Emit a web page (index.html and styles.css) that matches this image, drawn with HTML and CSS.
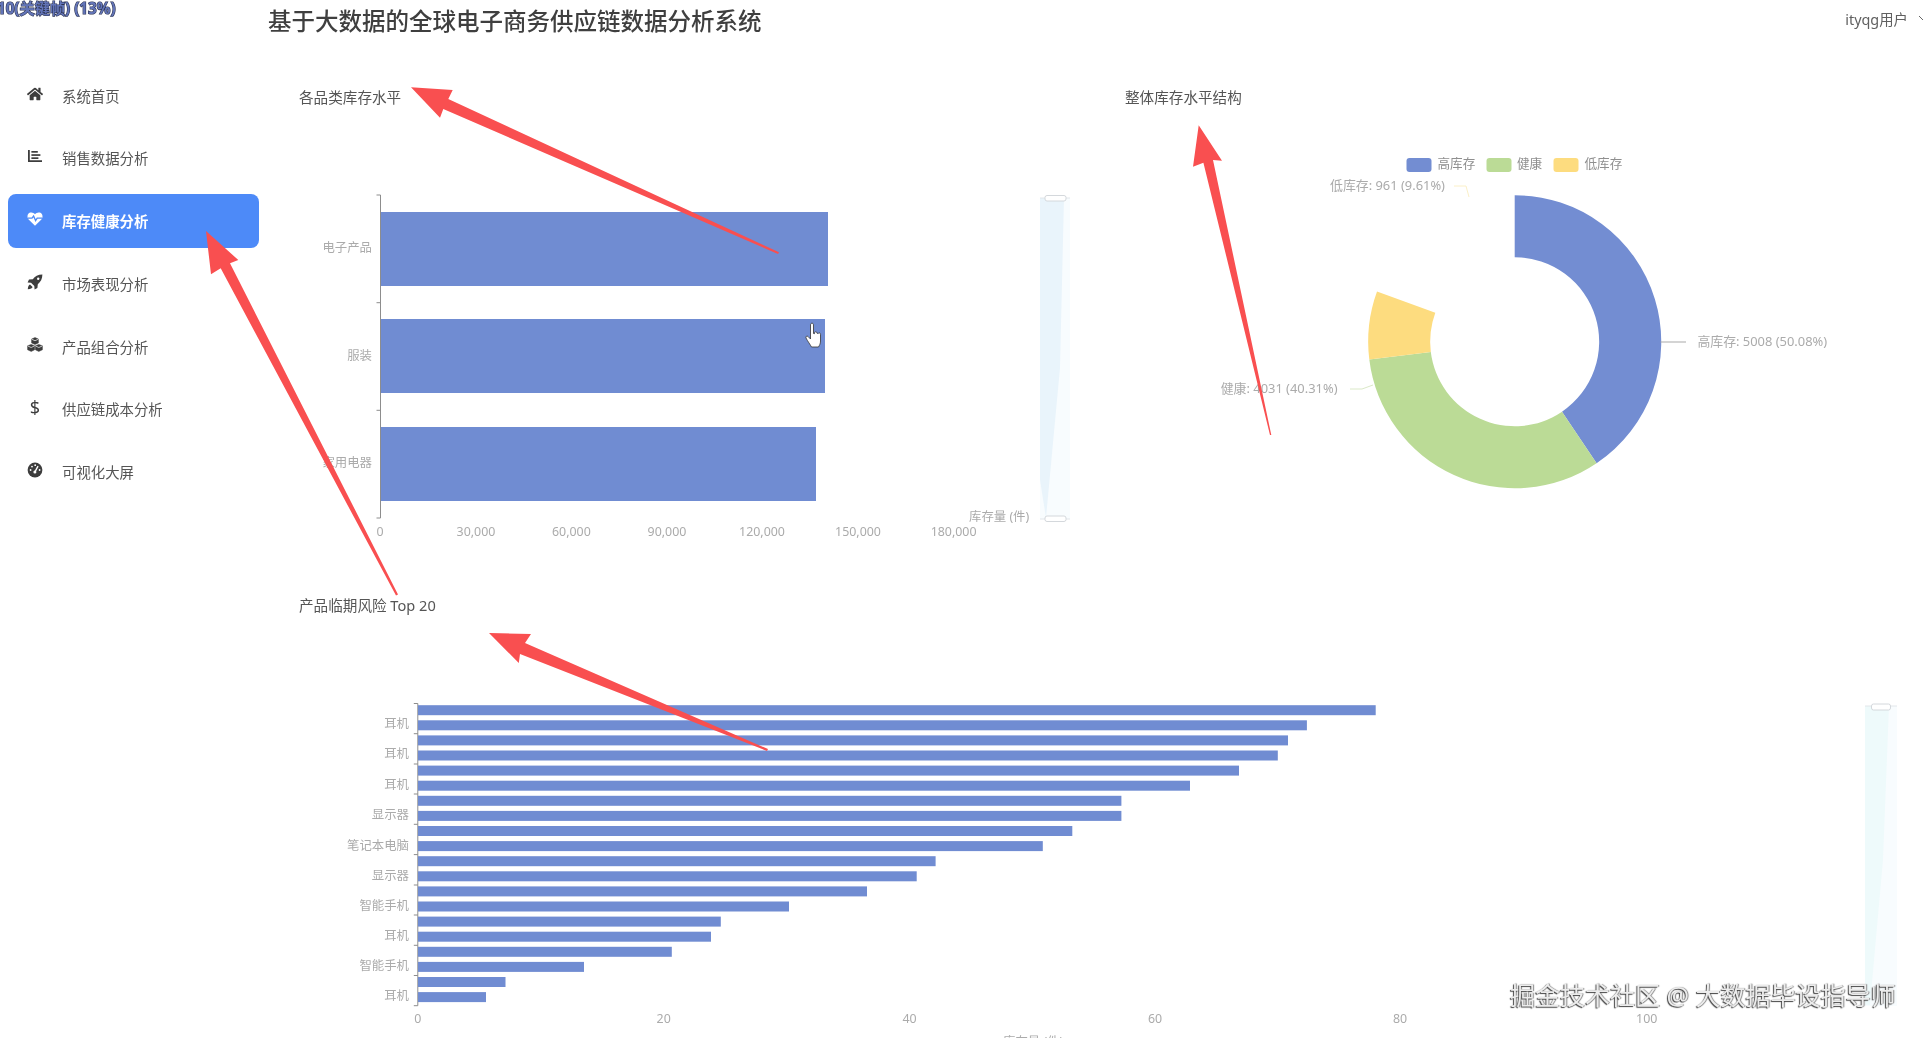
FILE: index.html
```html
<!DOCTYPE html>
<html lang="zh-CN">
<head>
<meta charset="utf-8">
<title>基于大数据的全球电子商务供应链数据分析系统</title>
<link rel="stylesheet" href="styles.css">
</head>
<body>
<div class="app">
  <aside class="sidebar">
    <nav class="nav">
      <a class="nav-item"><svg class="nav-icon" viewBox="0 0 576 512"><path d="M280.37 148.26L96 300.11V464a16 16 0 0 0 16 16l112.06-.29a16 16 0 0 0 15.92-16V368a16 16 0 0 1 16-16h64a16 16 0 0 1 16 16v95.64a16 16 0 0 0 16 16.05L464 480a16 16 0 0 0 16-16V300L295.67 148.26a12.19 12.19 0 0 0-15.3 0zM571.6 251.47L488 182.56V44.05a12 12 0 0 0-12-12h-56a12 12 0 0 0-12 12v72.61L318.47 43a48 48 0 0 0-61 0L4.34 251.47a12 12 0 0 0-1.6 16.9l25.5 31A12 12 0 0 0 45.15 301l235.22-193.74a12.19 12.19 0 0 1 15.3 0L530.9 301a12 12 0 0 0 16.9-1.6l25.5-31a12 12 0 0 0-1.7-16.93z"/></svg><span>系统首页</span></a>
      <a class="nav-item"><svg class="nav-icon" viewBox="0 0 16 16"><path d="M1 2h1.8v10.2H15V14H1z"/><rect x="4.4" y="3" width="6.4" height="1.7"/><rect x="4.4" y="6.2" width="9" height="1.7"/><rect x="4.4" y="9.3" width="7" height="1.7"/></svg><span>销售数据分析</span></a>
      <a class="nav-item is-active"><svg class="nav-icon" viewBox="0 0 16 16"><path d="M8 14.8 1.6 8.4C-.4 6.2.4 2.4 3.2 1.6 5 1.1 6.8 1.8 8 3.3 9.2 1.8 11 1.1 12.8 1.6 15.6 2.4 16.4 6.2 14.4 8.4Z"/><polyline class="pulse" points="1,7.2 5,7.2 6.6,5 8.6,9.6 10.2,7.2 15,7.2"/></svg><span>库存健康分析</span></a>
      <a class="nav-item"><svg class="nav-icon" viewBox="0 0 16 16"><path d="M15.4.6C11 .7 7.9 2.3 5.8 5.2L2 5.6.6 8.4l3.4.3 3.3 3.3.3 3.4 2.8-1.4.4-3.8C13.7 8.1 15.3 5 15.4.6z"/><circle class="hole" cx="11.2" cy="4.8" r="1.2"/><path d="M3 10.4c-1.2.4-2 1.8-2.2 4.8 3-.2 4.4-1 4.8-2.2z"/></svg><span>市场表现分析</span></a>
      <a class="nav-item"><svg class="nav-icon nav-icon-bold" viewBox="0 0 16 16"><path d="M8 .6 11.4 2v3.9L8 7.4 4.6 5.9V2z"/><path d="M4.2 7.4 7.6 8.8v4L4.2 14.4.6 12.8v-4z"/><path d="M11.8 7.4l3.6 1.4v4l-3.6 1.6-3.4-1.6v-4z"/><path class="seam" d="M4.6 2.2 8 3.7l3.4-1.5M.8 9l3.4 1.5L7.4 9M8.6 9l3.2 1.5L15.2 9"/></svg><span>产品组合分析</span></a>
      <a class="nav-item"><span class="nav-icon nav-glyph">$</span><span>供应链成本分析</span></a>
      <a class="nav-item"><svg class="nav-icon" viewBox="0 0 16 16"><circle cx="8" cy="8" r="7.4"/><path class="seam-thick" d="M8.2 9.4 11 4.2"/><circle class="hole" cx="7.9" cy="10" r="1.5"/><circle class="hole" cx="3.6" cy="8" r=".9"/><circle class="hole" cx="5" cy="4.6" r=".9"/><circle class="hole" cx="8.2" cy="3.2" r=".9"/><circle class="hole" cx="12.6" cy="8" r=".9"/></svg><span>可视化大屏</span></a>
    </nav>
  </aside>

  <main class="main">
    <header class="topbar">
      <h1 class="page-title">基于大数据的全球电子商务供应链数据分析系统</h1>
      <div class="user"><span>ityqg用户</span><svg class="chevron" viewBox="0 0 10 6"><polyline points="1,1 5,5 9,1"/></svg></div>
    </header>

    <section class="row-top">
      <div class="panel">
        <h2 class="panel-title panel-title-inset">各品类库存水平</h2>
        <svg class="chart" width="827" height="488" viewBox="298 108 827 488">
          <path class="axis" d="M380.5 195V518M376.5 195H380.5M376.5 302.7H380.5M376.5 410.3H380.5M376.5 518H380.5"/>
          <rect class="bar" x="381" y="212" width="447" height="74"/>
          <rect class="bar" x="381" y="319" width="444" height="74"/>
          <rect class="bar" x="381" y="427" width="435" height="74"/>
          <text class="lbl end" x="372" y="252">电子产品</text>
          <text class="lbl end" x="372" y="360">服装</text>
          <text class="lbl end" x="372" y="467">家用电器</text>
          <text class="lbl mid" x="380" y="536">0</text>
          <text class="lbl mid" x="476" y="536">30,000</text>
          <text class="lbl mid" x="571.4" y="536">60,000</text>
          <text class="lbl mid" x="667" y="536">90,000</text>
          <text class="lbl mid" x="762" y="536">120,000</text>
          <text class="lbl mid" x="858" y="536">150,000</text>
          <text class="lbl mid" x="953.6" y="536">180,000</text>
          <text class="lbl" x="969" y="521">库存量 (件)</text>
          <rect class="zoom-bg" x="1040" y="198" width="30" height="321"/>
          <polygon class="zoom-shape" points="1040,198 1064,198 1060,368 1046,518 1040,480"/>
          <path class="zoom-line" d="M1040 198H1070M1040 519H1070"/>
          <rect class="zoom-handle" x="1045" y="195.5" width="21" height="5.5" rx="2"/>
          <rect class="zoom-handle" x="1045" y="516" width="21" height="5.5" rx="2"/>
        </svg>
      </div>
      <div class="panel">
        <h2 class="panel-title">整体库存水平结构</h2>
        <svg class="chart" width="798" height="488" viewBox="1125 108 798 488">
          <rect class="c-blue" x="1406.5" y="158" width="25" height="14" rx="3"/>
          <text class="lbl-dark" x="1437.5" y="168">高库存</text>
          <rect class="c-green" x="1486.5" y="158" width="25" height="14" rx="3"/>
          <text class="lbl-dark" x="1517" y="168">健康</text>
          <rect class="c-yellow" x="1553.5" y="158" width="25" height="14" rx="3"/>
          <text class="lbl-dark" x="1584.5" y="168">低库存</text>
          <path class="c-blue" d="M1514.7 195.2A146.5 146.5 0 0 1 1596.6 463.2L1562 411.7A84.5 84.5 0 0 0 1514.7 257.2Z"/>
          <path class="c-green" d="M1596.6 463.2A146.5 146.5 0 0 1 1369.3 359.6L1430.8 352A84.5 84.5 0 0 0 1562 411.7Z"/>
          <path class="c-yellow" d="M1369.3 359.6A146.5 146.5 0 0 1 1377 291.6L1435.3 312.8A84.5 84.5 0 0 0 1430.8 352Z"/>
          <path class="lead-blue" d="M1660.6 342H1686"/>
          <path class="lead-green" d="M1350 389H1362L1373 385"/>
          <path class="lead-yellow" d="M1454 186H1466L1469 197"/>
          <text class="lbl lbl-pie" x="1697.4" y="345.5">高库存: 5008 (50.08%)</text>
          <text class="lbl lbl-pie" x="1220.7" y="393">健康: 4031 (40.31%)</text>
          <text class="lbl lbl-pie" x="1330" y="189.5">低库存: 961 (9.61%)</text>
        </svg>
      </div>
    </section>

    <section class="panel">
      <h2 class="panel-title panel-title-inset">产品临期风险 Top 20</h2>
      <svg class="chart" width="1625" height="422" viewBox="298 616 1625 422">
        <path class="axis" d="M417.8 703.5V1005.7M413.8 703.5h4M413.8 733.7h4M413.8 764h4M413.8 794h4M413.8 824.3h4M413.8 854.6h4M413.8 885h4M413.8 915h4M413.8 945.3h4M413.8 975.5h4M413.8 1005.7h4"/>
        <rect class="bar" x="418" y="705.2" width="957.7" height="10"/>
        <rect class="bar" x="418" y="720.3" width="888.9" height="10"/>
        <rect class="bar" x="418" y="735.4" width="870" height="10"/>
        <rect class="bar" x="418" y="750.5" width="859.8" height="10"/>
        <rect class="bar" x="418" y="765.6" width="821" height="10"/>
        <rect class="bar" x="418" y="780.7" width="772" height="10"/>
        <rect class="bar" x="418" y="795.8" width="703.4" height="10"/>
        <rect class="bar" x="418" y="810.9" width="703.4" height="10"/>
        <rect class="bar" x="418" y="826" width="654.3" height="10"/>
        <rect class="bar" x="418" y="841.1" width="624.8" height="10"/>
        <rect class="bar" x="418" y="856.2" width="517.6" height="10"/>
        <rect class="bar" x="418" y="871.3" width="498.7" height="10"/>
        <rect class="bar" x="418" y="886.4" width="449" height="10"/>
        <rect class="bar" x="418" y="901.5" width="371" height="10"/>
        <rect class="bar" x="418" y="916.6" width="302.8" height="10"/>
        <rect class="bar" x="418" y="931.7" width="293" height="10"/>
        <rect class="bar" x="418" y="946.8" width="253.8" height="10"/>
        <rect class="bar" x="418" y="961.9" width="166" height="10"/>
        <rect class="bar" x="418" y="977" width="87.5" height="10"/>
        <rect class="bar" x="418" y="992.1" width="68" height="10"/>
        <text class="lbl end" x="409" y="728">耳机</text>
        <text class="lbl end" x="409" y="758">耳机</text>
        <text class="lbl end" x="409" y="789">耳机</text>
        <text class="lbl end" x="409" y="819">显示器</text>
        <text class="lbl end" x="409" y="849.5">笔记本电脑</text>
        <text class="lbl end" x="409" y="879.5">显示器</text>
        <text class="lbl end" x="409" y="910">智能手机</text>
        <text class="lbl end" x="409" y="940">耳机</text>
        <text class="lbl end" x="409" y="970">智能手机</text>
        <text class="lbl end" x="409" y="1000">耳机</text>
        <text class="lbl mid" x="417.8" y="1022.5">0</text>
        <text class="lbl mid" x="663.7" y="1022.5">20</text>
        <text class="lbl mid" x="909.6" y="1022.5">40</text>
        <text class="lbl mid" x="1155" y="1022.5">60</text>
        <text class="lbl mid" x="1400" y="1022.5">80</text>
        <text class="lbl mid" x="1646.7" y="1022.5">100</text>
        <text class="lbl" x="1003" y="1046">库存量 (件)</text>
        <rect class="zoom-bg" x="1865" y="706" width="32" height="300"/>
        <polygon class="zoom-shape-c" points="1865,706 1889,706 1883,860 1870,1005 1865,1005"/>
        <path class="zoom-line" d="M1865 706H1897"/>
        <rect class="zoom-handle" x="1871.5" y="704" width="19" height="6" rx="2"/>
      </svg>
    </section>
  </main>

  <div class="capture-tag">10(关键帧) (13%)</div>
  <div class="watermark">掘金技术社区 @ 大数据毕设指导师</div>

  <svg class="annotations" viewBox="0 0 1923 1038">
    <polygon class="arrow" points="411,87.3 452.7,90 448.3,99 779,252.3 778,254 443.3,109 440,117.7"/>
    <polygon class="arrow" points="206,231 238.3,260 230,263.3 398,594.5 396,595.5 220.7,268.3 211,274.3"/>
    <polygon class="arrow" points="1198.7,125.3 1222,160.7 1213,160 1271.3,435 1270,435 1203.4,162.7 1193,166.7"/>
    <polygon class="arrow" points="489,633 531,634 525,643 768,749 767,751 520,654 518.8,663"/>
    <path class="hand" d="M810.5 325c0-2.4 3-2.4 3 0v8.5l1 .2v-.8c0-1.5 2.4-1.5 2.4.2l1.3.4c.4-1 2.3-.8 2.3.8V341c0 3-1 4-2 6h-7c-1-2-4-6-5.5-9-.7-1.5 1-2.5 2-1.5l2.5 2.5z"/>
  </svg>
</div>
</body>
</html>
```

FILE: styles.css
```css
* { box-sizing: border-box; }
html, body { margin: 0; height: 100%; overflow: hidden; background: #fff; }
body { font-family: "Noto Sans", "Noto Sans CJK SC", sans-serif; color: #555; }

.app { position: relative; display: flex; width: 1923px; height: 1038px; overflow: hidden; background: #fff; filter: blur(0.35px); }

.sidebar { width: 267px; flex: none; padding: 68px 8px 0; }
.nav { display: flex; flex-direction: column; gap: 8.8px; }
.nav-item { display: flex; align-items: center; height: 54px; width: 251px; padding-left: 19px; gap: 19px; border-radius: 8px; font-size: 14.4px; color: #555; }
.nav-item.is-active { background: #4d8af8; color: #fff; font-weight: 700; }
.nav-icon { width: 16px; height: 16px; flex: none; fill: #3d3d3d; margin-top: -3px; }
.nav-icon-bold { stroke: #3d3d3d; stroke-width: .5; }
.is-active .nav-icon { fill: #fff; }
.nav-glyph { display: flex; align-items: center; justify-content: center; font-size: 18px; color: #3d3d3d; }
.pulse { fill: none; stroke: #4d8af8; stroke-width: 1.3; }
.hole { fill: #fff; }
.seam { fill: none; stroke: #fff; stroke-width: .7; }
.seam-thick { fill: none; stroke: #fff; stroke-width: 1.4; }

.main { flex: 1; min-width: 0; display: flex; flex-direction: column; }
.topbar { display: flex; align-items: center; justify-content: space-between; height: 42px; padding-left: 1px; }
.page-title { margin: 0; font-size: 23.5px; line-height: 42px; font-weight: 500; color: #3f3f3f; white-space: nowrap; }
.user { display: flex; align-items: center; gap: 10px; margin: -6px -5px 0 0; font-size: 14.4px; color: #606060; }
.chevron { width: 10px; height: 6px; fill: none; stroke: #666; stroke-width: 1; }

.row-top { display: grid; grid-template-columns: 827px 798px; margin: 44.5px 0 0 31px; height: 508px; }
.main > .panel { margin-left: 31px; }
.panel { min-width: 0; }
.panel-title { margin: 0 0 1.5px; font-size: 14.6px; line-height: 20px; font-weight: 400; color: #555; white-space: nowrap; }
.panel-title-inset { padding-left: 1px; }
.chart { display: block; overflow: hidden; }

.axis { fill: none; stroke: #8d8d8d; stroke-width: 1; }
.bar { fill: #708cd2; }
.lbl { font-size: 12.4px; fill: #ababab; }
.lbl-pie { font-size: 12.9px; }
.lbl-dark { font-size: 12.6px; fill: #8f8f8f; }
.end { text-anchor: end; }
.mid { text-anchor: middle; }

.c-blue { fill: #738dd2; }
.c-green { fill: #bbdb96; }
.c-yellow { fill: #fddc7f; }
.lead-blue { fill: none; stroke: #a9a9a9; stroke-width: 1; }
.lead-green { fill: none; stroke: #dbe9c8; stroke-width: 1; }
.lead-yellow { fill: none; stroke: #fbf0c8; stroke-width: 1; }

.zoom-bg { fill: #f8fcfe; }
.zoom-shape { fill: #e9f4fb; }
.zoom-shape-c { fill: #eefafb; }
.zoom-line { fill: none; stroke: #e2e6ea; stroke-width: 1; }
.zoom-handle { fill: #fff; stroke: #d4d8dc; stroke-width: 1; }

.capture-tag { position: absolute; left: -3px; top: -2px; font-size: 15.2px; line-height: 20px; font-weight: 700; color: #6274b8; -webkit-text-stroke: 1.2px #2c3350; paint-order: stroke fill; white-space: nowrap; }
.watermark { position: absolute; left: 1510px; top: 976.5px; width: 386px; font-size: 25px; line-height: 36px; color: #ececec; text-shadow: -1px 1px 1px #444, 1px 0 1px #888; white-space: nowrap; }

.annotations { position: absolute; inset: 0; width: 1923px; height: 1038px; pointer-events: none; }
.arrow { fill: #f94f50; }
.hand { fill: #fff; stroke: #333; stroke-width: .8; }
```
